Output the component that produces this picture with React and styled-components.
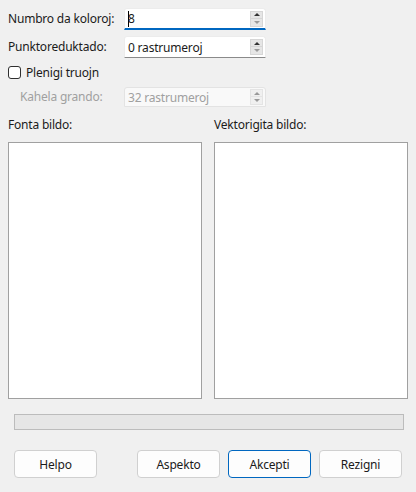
import React from 'react';
import styled, { createGlobalStyle } from 'styled-components';

const GlobalStyle = createGlobalStyle`
    html, body {
        margin: 0;
        padding: 0;
        background: #f0f0f0;
    }
    body {
        font-family: "Noto Sans", "Open Sans", sans-serif;
        font-size: 12px;
        letter-spacing: -0.2px;
        color: #1b1b1b;
    }
`;

const Dialog = styled.div`
    width: 416px;
    height: 492px;
    box-sizing: border-box;
    background: #f0f0f0;
    display: flex;
    flex-direction: column;
`;

const Form = styled.div`
    display: grid;
    grid-template-columns: 116px 142px;
    grid-template-rows: 22px 22px 17px 20px;
    row-gap: 6px;
    padding: 8px 8px 0 8px;
    align-items: center;
`;

const Label = styled.label`
    padding-left: ${p => (p.indent ? '12px' : '0')};
    color: ${p => (p.disabled ? '#a0a0a0' : '#1b1b1b')};
    line-height: 16px;
    white-space: nowrap;
`;

const SpinBox = styled.div`
    height: ${p => (p.disabled ? '20px' : '22px')};
    box-sizing: border-box;
    display: flex;
    align-items: center;
    background: ${p => (p.disabled ? '#f9f9f9' : '#ffffff')};
    border: 1px solid ${p => (p.disabled ? '#e3e3e3' : '#ececec')};
    border-bottom: ${p =>
        p.focused ? '2px solid #0067c0' : p.disabled ? '1px solid #e3e3e3' : '1px solid #8a8a8a'};
    border-radius: 3px 3px 0 0;
    padding: 0 2px 0 2px;
`;

const SpinText = styled.div`
    flex: 1;
    display: flex;
    align-items: center;
    padding-left: 1px;
    color: ${p => (p.disabled ? '#a0a0a0' : '#1b1b1b')};
    white-space: nowrap;
`;

const Caret = styled.span`
    display: inline-block;
    width: 1px;
    height: 16px;
    background: #000;
    margin-right: -1px;
`;

const Arrows = styled.div`
    display: flex;
    flex-direction: column;
    width: 13px;
`;

const ArrowButton = styled.div`
    height: 8px;
    box-sizing: border-box;
    display: flex;
    align-items: center;
    justify-content: center;
    background: ${p => (p.disabled ? '#f0f0f0' : '#e6e6e6')};
    border: 1px solid ${p => (p.disabled ? '#e4e4e4' : '#d6d6d6')};
    border-top: ${p => (p.down ? 'none' : undefined)};
`;

const Triangle = styled.span`
    width: 0;
    height: 0;
    border-left: 3px solid transparent;
    border-right: 3px solid transparent;
    ${p =>
        p.down
            ? `border-top: 3px solid ${p.dim ? '#9a9a9a' : '#333'};`
            : `border-bottom: 3px solid ${p.dim ? '#9a9a9a' : '#333'};`}
`;

const CheckRow = styled.label`
    grid-column: 1 / span 2;
    display: flex;
    align-items: center;
    gap: 5px;
    line-height: 16px;
`;

const CheckBox = styled.span`
    width: 13px;
    height: 13px;
    box-sizing: border-box;
    border: 1px solid #2f2f2f;
    border-radius: 3px;
    background: #fff;
`;

const Panels = styled.div`
    display: grid;
    grid-template-columns: 194px 194px;
    column-gap: 12px;
    padding: 0 8px;
    margin-top: 10px;
`;

const Panel = styled.div`
    display: flex;
    flex-direction: column;
    gap: 9px;
`;

const PanelTitle = styled.div`
    line-height: 16px;
`;

const ImageBox = styled.div`
    height: 257px;
    box-sizing: border-box;
    background: #fff;
    border: 1px solid #a0a0a0;
`;

const Progress = styled.div`
    margin: 15px 12px 0 14px;
    height: 16px;
    box-sizing: border-box;
    background: #e6e6e6;
    border: 1px solid #bcbcbc;
`;

const ButtonRow = styled.div`
    display: flex;
    gap: 8px;
    margin-top: 20px;
    padding: 0 14px;
`;

const Button = styled.button`
    width: 83px;
    height: 28px;
    box-sizing: border-box;
    background: #fdfdfd;
    border: 1px solid ${p => (p.primary ? '#0067c0' : '#d0d0d0')};
    border-radius: 4px;
    font-family: "Noto Sans", "Open Sans", sans-serif;
    font-size: 12px;
    letter-spacing: -0.2px;
    color: #1b1b1b;
    padding: 0;
    margin-right: ${p => (p.spaced ? '32px' : '0')};
`;

function Spin({ value, focused, disabled, downDim }) {
    return (
        <SpinBox focused={focused} disabled={disabled}>
            <SpinText disabled={disabled}>
                {focused && <Caret />}
                {value}
            </SpinText>
            <Arrows>
                <ArrowButton disabled={disabled}>
                    <Triangle dim={disabled} />
                </ArrowButton>
                <ArrowButton down disabled={disabled}>
                    <Triangle down dim={disabled || downDim} />
                </ArrowButton>
            </Arrows>
        </SpinBox>
    );
}

export default function App() {
    return (
        <Dialog>
            <GlobalStyle />
            <Form>
                <Label>Numbro da koloroj:</Label>
                <Spin value="8" focused downDim />
                <Label>Punktoreduktado:</Label>
                <Spin value="0 rastrumeroj" downDim />
                <CheckRow>
                    <CheckBox />
                    Plenigi truojn
                </CheckRow>
                <Label indent disabled>Kahela grando:</Label>
                <Spin value="32 rastrumeroj" disabled />
            </Form>
            <Panels>
                <Panel>
                    <PanelTitle>Fonta bildo:</PanelTitle>
                    <ImageBox />
                </Panel>
                <Panel>
                    <PanelTitle>Vektorigita bildo:</PanelTitle>
                    <ImageBox />
                </Panel>
            </Panels>
            <Progress />
            <ButtonRow>
                <Button spaced>Helpo</Button>
                <Button>Aspekto</Button>
                <Button primary>Akcepti</Button>
                <Button>Rezigni</Button>
            </ButtonRow>
        </Dialog>
    );
}
